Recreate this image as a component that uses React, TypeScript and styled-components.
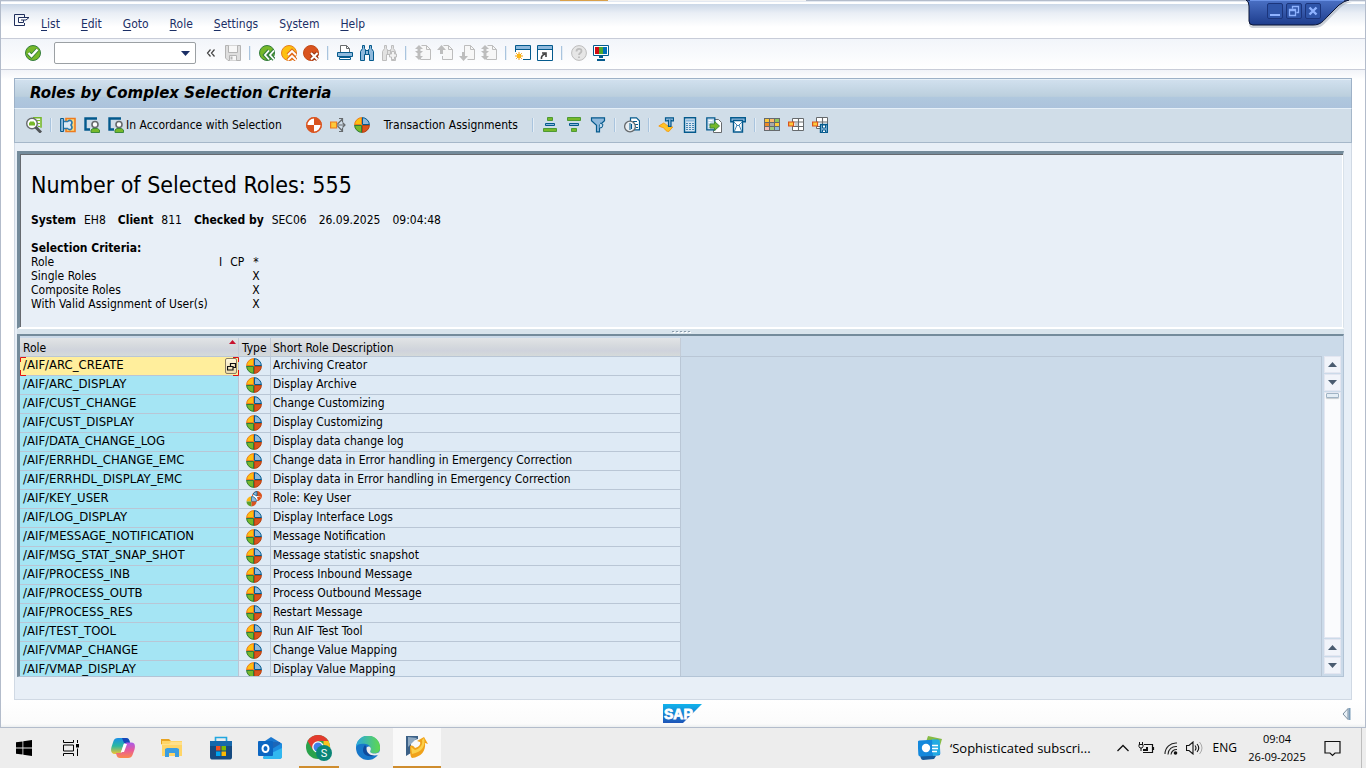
import React from 'react';
import styled, { createGlobalStyle, css } from 'styled-components';

const UI_FONT = '"DejaVu Sans Condensed", "DejaVu Sans", sans-serif';
const OS_FONT = '"Open Sans", "Noto Sans", sans-serif';

const GlobalStyle = createGlobalStyle`
  *, *::before, *::after { box-sizing: border-box; }
  body { margin: 0; background: #ededed; }
  button { font: inherit; color: inherit; background: none; border: 0; padding: 0; cursor: pointer; }
`;

/* ---------- shell ---------- */

const Screen = styled.div`
  height: 100vh;
  min-height: 480px;
  display: flex;
  flex-direction: column;
  font-family: ${UI_FONT};
  font-size: 12px;
  line-height: 14px;
  color: #000;
`;

const SapWindow = styled.main`
  position: relative;
  flex: 1;
  min-height: 0;
  display: flex;
  flex-direction: column;
  background: #fff;
  border: 1px solid #b3bccb;
`;

/* sliver of the remote session bar that peeks over the window's top edge */
const SessionEdge = styled.div`
  position: absolute;
  top: -1px;
  left: 41%;
  width: 18%;
  height: 1px;
  background: linear-gradient(90deg, #d9a04a 48px, #f3f3f3 48px);
`;

const MenuBar = styled.nav`
  flex: none;
  height: 38px;
  display: flex;
  align-items: center;
  gap: 21px;
  padding: 8px 12px 0 13px;
  border-bottom: 1px solid #c8ccd8;
  background: linear-gradient(#e3e9f2 0 1px, #fff 1px 3px, #cbd7e7 3px, #e9eef5 12px, #fff 26px);
`;

const MenuItem = styled.button`
  color: #1b2f66;
  line-height: 16px;
  & > u { text-underline-offset: 2px; }
`;

const MenuGlyph = styled.button`
  display: flex;
  margin: -4px -10px 0 0;
`;

const WindowTab = styled.div`
  position: absolute;
  top: -1px;
  right: 13px;
  width: 106px;
  height: 30px;
  & > svg { position: absolute; inset: 0; }
`;

const WindowButtons = styled.div`
  position: relative;
  display: flex;
  gap: 3px;
  padding: 3px 0 0 21px;
`;

const WindowButton = styled.button`
  width: 16px;
  height: 16px;
  display: flex;
  border: 1px solid #1b357c;
  border-radius: 2px;
  background: #2f55a9;
`;

const Toolbar = styled.div`
  flex: none;
  height: 31px;
  display: flex;
  align-items: center;
  gap: 6px;
  padding: 0 24px 2px;
  border-bottom: 1px solid #c8ccd8;
  background: linear-gradient(#f2f5fa, #fff);
`;

const IconButton = styled.button`
  flex: none;
  display: flex;
  align-items: center;
  justify-content: center;
  width: 16px;
  height: 16px;
`;

const Separator = styled.span<{ $space?: number }>`
  flex: none;
  width: 2px;
  height: 14px;
  margin: 0 ${p => p.$space ?? 0}px;
  background: #a9c4de;
  border-right: 1px solid #e4edf5;
`;

const CommandBox = styled.div`
  flex: none;
  display: flex;
  width: 142px;
  height: 22px;
  margin: 0 4px 0 7px;
  background: #fff;
  border: 1px solid #9ba0a4;
  border-radius: 2px;
`;

const CommandInput = styled.input`
  flex: 1;
  min-width: 0;
  border: 0;
  outline: 0;
  padding: 0 4px;
  background: transparent;
  font: inherit;
`;

const ComboArrow = styled.button`
  width: 20px;
  display: flex;
  align-items: center;
  justify-content: center;
`;

const Collapse = styled.button`
  width: 10px;
  height: 16px;
  display: flex;
  margin-right: 3px;
`;

const Work = styled.section`
  flex: 1;
  min-height: 0;
  display: flex;
  flex-direction: column;
  padding: 8px 13px 0;
  background: linear-gradient(#f1f3f8, #fff 10px);
`;

const Panel = styled.div`
  flex: 1;
  min-height: 0;
  display: flex;
  flex-direction: column;
  border: 1px solid #d0d9e4;
  background: #e8eff7;
`;

const Title = styled.h1`
  flex: none;
  margin: -1px -1px 0;
  height: 31px;
  padding: 0 15px;
  font-family: "DejaVu Sans", sans-serif;
  font-size: 15px;
  font-weight: bold;
  font-style: italic;
  line-height: 28px;
  border: 1px solid #9db1c7;
  border-bottom: 1px solid #e6f0f8;
  box-shadow: inset 0 1px 0 #e6f0f8;
  background: linear-gradient(#d2e1ef, #bbcfdd 60%, #b0c8de 62%, #acc3dc);
`;

const AppToolbar = styled.div`
  flex: none;
  height: 34px;
  margin: 0 -1px;
  display: flex;
  align-items: center;
  gap: 8px;
  padding: 0 11px 2px;
  border: 1px solid #a5b7c9;
  border-top: 0;
  background: #d0dde8;
`;

const TextButton = styled.button<{ $left?: number; $right?: number }>`
  display: flex;
  align-items: center;
  gap: 2px;
  height: 18px;
  white-space: nowrap;
  margin: 0 ${p => p.$right ?? 0}px 0 ${p => p.$left ?? 0}px;
`;

const Summary = styled.section`
  flex: none;
  height: 178px;
  margin: 8px 7px 0 2px;
  padding: 17px 11px;
  border-style: solid;
  border-width: 3px 1px 2px 3px;
  border-color: #748b9b #d9e2ea #fff #748b9b;
  box-shadow: inset 1px 1px 0 #666a70, inset -1px 0 0 #fff;
`;

const Count = styled.h2`
  margin: 0;
  font-size: 23px;
  font-weight: normal;
  line-height: 28px;
`;

const Facts = styled.dl`
  display: flex;
  gap: 8px;
  margin: 14px 0;
  & > dt { font-weight: bold; }
  & > dd { margin: 0 4px 0 0; }
`;

const Criteria = styled.table`
  border-collapse: collapse;
  & caption { text-align: left; font-weight: bold; }
  & th { font-weight: normal; text-align: left; padding: 0; width: 188px; }
  & td { padding: 0 8px 0 0; }
  & td:last-child { padding: 0; text-align: center; }
`;

const Splitter = styled.div`
  flex: none;
  height: 5px;
  margin: 0 7px 0 2px;
  display: flex;
  align-items: center;
  justify-content: center;
  gap: 2px;
  background: #d9e4ec;
  & > i { width: 2px; height: 1px; background: #8b9cab; box-shadow: 1px 1px 0 #fff; }
`;

const Grid = styled.section`
  flex: 1;
  min-height: 0;
  margin: 0 7px 22px 2px;
  display: flex;
  overflow: hidden;
  background: #cbdae9;
  border-style: solid;
  border-width: 2px 1px 1px 3px;
  border-color: #748b9b #b3c4d6 #b3c4d6 #748b9b;
`;

const GridBody = styled.div`
  flex: 1;
  min-width: 0;
  overflow: hidden;
  padding-top: 2px;
  background:
    linear-gradient(#b9c6d5, #b9c6d5) 0 20px / 100% 1px no-repeat,
    linear-gradient(#b9c6d5, #b9c6d5) 100% 20px / 1px 100% no-repeat;
`;

const RoleTable = styled.table`
  width: 661px;
  table-layout: fixed;
  border-collapse: separate;
  border-spacing: 0;
`;

const HeadCell = styled.th<{ $width: number }>`
  position: relative;
  width: ${p => p.$width}px;
  height: 19px;
  padding: 2px 0 0 3px;
  text-align: left;
  font-weight: normal;
  white-space: nowrap;
  border-right: 1px solid #c3cbd6;
  border-bottom: 1px solid #b9c6d5;
  background: linear-gradient(#e2e4e6, #d6dade 40%, #cfd3dc 70%, #d5dada);
  & > svg { position: absolute; top: 2px; right: 2px; }
  &:last-child { padding-left: 2px; }
`;

const cell = css`
  height: 19px;
  padding: 0 0 2px 3px;
  white-space: nowrap;
  border-right: 1px solid #b9c6d5;
  border-bottom: 1px solid #b9c6d5;
`;

const RoleCell = styled.td<{ $selected?: boolean }>`
  ${cell}
  position: relative;
  font-size: 13px;
  background: ${p => (p.$selected ? '#ffee9c' : '#a5e5f4')};
`;

const TypeCell = styled.td`
  ${cell}
  padding: 0 0 0 7px;
  background: #deeaf5;
  & > svg { display: block; }
`;

const TextCell = styled.td`
  ${cell}
  padding-left: 2px;
  background: #deeaf5;
`;

const SelectionFrame = styled.svg`
  position: absolute;
  top: 0;
  left: 0;
  width: calc(100% + 1px);
  height: calc(100% + 1px);
`;

const PickButton = styled.button`
  position: absolute;
  top: 1px;
  right: 1px;
  width: 12px;
  height: 16px;
  display: flex;
  align-items: center;
  justify-content: center;
  border: 1px solid #8a7d62;
  border-radius: 2px;
  background: linear-gradient(#fff8dc, #ecdcae);
`;

const ScrollBar = styled.div`
  flex: none;
  width: 21px;
  display: flex;
  flex-direction: column;
  gap: 1px;
  padding: 20px 2px 2px;
`;

const ScrollButton = styled.button`
  flex: none;
  height: 17px;
  display: flex;
  align-items: center;
  justify-content: center;
  background: #f1f4fa;
  border: 1px solid #e3e6f1;
`;

const ScrollTrack = styled.div`
  flex: 1;
  background: #fafbfd;
  border: 1px solid #e3e6f1;
`;

const ScrollThumb = styled.div`
  height: 5px;
  margin: 0 1px;
  border: 1px solid #a0b3c4;
  border-radius: 1px;
  background: #e4edf5;
  box-shadow: 0 1px 1px #c4c9ce;
`;

const StatusBar = styled.footer`
  flex: none;
  height: 27px;
  display: grid;
  grid-template-columns: 1fr auto 1fr;
  align-items: center;
  padding: 0 14px 0 12px;
  background: linear-gradient(#fff, #fbfbfb 24px, #eceff0);
  & > :last-child { justify-self: end; }
`;

/* ---------- task bar ---------- */

const TaskBar = styled.footer`
  flex: none;
  height: 40px;
  display: flex;
  align-items: stretch;
  background: #ededed;
  font-family: ${OS_FONT};
`;

const Shell = styled.div`
  display: flex;
  & > button { width: 47px; }
`;

const Apps = styled.div`
  display: flex;
  gap: 1px;
  margin-left: 5px;
`;

const AppButton = styled.button<{ $running?: boolean; $active?: boolean }>`
  width: 48px;
  display: flex;
  align-items: center;
  justify-content: center;
  background: ${p => (p.$active ? '#f9f9f9' : 'none')};
  ${p => p.$running && css`
    background-image: linear-gradient(#cf8d2e, #cf8d2e);
    background-size: ${p.$active ? '100%' : '40px'} 2px;
    background-position: bottom center;
    background-repeat: no-repeat;
  `}
`;

const Tray = styled.div`
  margin-left: auto;
  display: flex;
  align-items: center;
  padding-right: 4px;
`;

const News = styled.button`
  display: flex;
  align-items: center;
  gap: 8px;
  margin-right: 24px;
  font-size: 13px;
  line-height: 20px;
  white-space: nowrap;
`;

const TrayIcons = styled.div`
  display: flex;
  align-items: center;
  gap: 8px;
`;

const Language = styled.button`
  margin-left: 2px;
`;

const Clock = styled.time`
  width: 60px;
  margin: 0 17px 0 10px;
  text-align: center;
  font-size: 11px;
  line-height: 18px;
  white-space: nowrap;
`;

const Notify = styled.button`
  display: flex;
  padding-right: 20px;
  height: 40px;
  align-items: center;
  border-right: 1px solid #bdbdbd;
`;

/* ---------- icons ---------- */

const BLUE = '#045a8d';
const SKY = '#8fb9dc';
const GREEN = '#76b82a';
const AMBER = '#fcb514';
const RUST = '#d9531e';
const GREY = '#666a6d';
const MUTED = '#bdbdbd';

type P = { children: React.ReactNode; w?: number; h?: number; vb?: string };
const Svg = ({ children, w = 16, h = 16, vb }: P) => (
  <svg width={w} height={h} viewBox={vb ?? `0 0 ${w} ${h}`} fill="none" aria-hidden="true" style={{ flex: 'none' }}>{children}</svg>
);

const Check = () => <Svg><circle cx="8" cy="8" r="7.5" fill={GREEN} stroke="#347d3d" /><path d="M3.5 8l3 3 6-6.5" stroke="#347d3d" strokeWidth="4" /><path d="M3.5 8l3 3 6-6.5" stroke="#fff" strokeWidth="2.4" /></Svg>;
const Chevrons = () => <Svg w={10}><path d="M4.5 4.5L1.5 8l3 3.5M8.5 4.5L5.5 8l3 3.5" stroke="#444" strokeWidth="1.2" /></Svg>;
const Save = () => <Svg><path d="M.5.5h15v15H3L.5 13z" fill="#dedede" stroke="#b4b4b4" /><path d="M3.5.5v7h9v-7M4.5 15.500v-5h7v5" fill="#f7f7f7" stroke="#b4b4b4" /><path d="M6.500 11.500v3" stroke="#b4b4b4" strokeWidth="2" /></Svg>;
const Back = () => <Svg><circle cx="8" cy="8" r="7.5" fill={GREEN} stroke="#347d3d" /><path d="M10 5.5L6 10l4 4.5M15 5.5L11 10l4 4.5" stroke="#347d3d" strokeWidth="4" /><path d="M10 5.5L6 10l4 4.5M15 5.5L11 10l4 4.5" stroke="#fff" strokeWidth="1.8" /></Svg>;
const Exit = () => <Svg><circle cx="8" cy="8" r="7.5" fill="#fdc010" stroke="#e67e22" /><path d="M7 10l4-4 4 4M7 15l4-4 4 4" stroke="#e06a1c" strokeWidth="4" /><path d="M7 10l4-4 4 4M7 15l4-4 4 4" stroke="#fff" strokeWidth="1.8" /></Svg>;
const Cancel = () => <Svg><circle cx="8" cy="8" r="7.5" fill={RUST} stroke="#c24a17" /><path d="M8 8l6.5 6.5M14.5 8L8 14.5" stroke="#9c3513" strokeWidth="4" /><path d="M8 8l6.5 6.5M14.5 8L8 14.5" stroke="#fff" strokeWidth="2" /></Svg>;
const Printer = () => <Svg><path d="M3.5 7V.5h6l3 3V7" fill="#fff" stroke={GREY} /><path d="M9.5.5v3h3" stroke={GREY} /><path d="M.5 7.500h15v4H.5z" fill={SKY} stroke={BLUE} /><path d="M2.500 12.500h11v2h-11z" fill="#fff" stroke={BLUE} /></Svg>;
const Binoculars = ({ plus }: { plus?: boolean }) => {
  const s = plus ? MUTED : BLUE;
  return (
    <Svg>
      <path d="M3.5.5h2v3l1.500 2h2l1.500-2v-3h2v3l2 3v9h-4v-6h-5v6h-4v-9l2-3z" fill={plus ? '#e2e2e2' : SKY} stroke={s} />
      <path d="M6.500 5v4M9.500 5v4" stroke={s} />
      {plus && <path d="M10.500 6.500h3V9h2v3h-2v2.500h-3V12h-2V9h2z" fill="#f2f2f2" stroke={MUTED} />}
    </Svg>
  );
};
const PageIcon = ({ up, down, both }: { up?: boolean; down?: boolean; both?: boolean }) => (
  <Svg>
    <path d={down ? 'M5.5 8V.5h6l4 4v10h-7' : 'M6.5.5h5l4 4v10h-10V11'} fill="#f7f7f7" stroke={MUTED} /><path d="M11.5.5v4h4" stroke={MUTED} />
    {up && <path d="M4.500 0L9 5H6v4H3V5H0z" fill={MUTED} />}
    {down && <path d="M4.500 16L9 11H6V7H3v4H0z" fill={MUTED} />}
    {both && <path d="M4 0l4 4H5.500v2H8l-4 4-4-4h2.500V4H0zM2.500 9h3v2H8l-4 4-4-4h2.500z" fill={MUTED} />}
  </Svg>
);
const NewSession = () => <Svg><path d="M.5 7V.5h15v14H8" fill="#fff" stroke={BLUE} /><path d="M1 1h14v3H1z" fill={SKY} /><path d="M0 4.500h16" stroke={BLUE} /><path d="M4 7v8M0 11h8M1.200 8.200l5.600 5.600M6.800 8.200l-5.600 5.600" stroke="#f39c12" /><circle cx="4" cy="11" r="2.200" fill="#fdb813" /></Svg>;
const Shortcut = () => <Svg><path d="M.5.5h15v15H.5z" fill="#fff" stroke={BLUE} /><path d="M1 1h14v3H1z" fill={SKY} /><path d="M0 4.500h16" stroke={BLUE} /><path d="M4.500 14c-.5-2.500 1-4 3.500-5M5 8h4v4" stroke="#444" strokeWidth="1.600" /></Svg>;
const HelpIcon = () => <Svg><circle cx="8" cy="8" r="7.400" fill="#e6e6e6" stroke={MUTED} /><path d="M5.500 6.500c0-3.500 5-3.500 5-.5 0 2-2.500 2-2.500 4M8 11.500v1.500" stroke={MUTED} strokeWidth="1.800" /></Svg>;
const MonitorIcon = () => <Svg><path d="M.5.5h15v10H.5z" fill="#fff" stroke={BLUE} /><path d="M2 2h4v7H2z" fill="#d20a11" /><path d="M6 2h4v7H6z" fill="#4fa82e" /><path d="M10 2h4v7h-4z" fill="#0070b8" /><path d="M6 11h4v2H6zM4 14h8v2H4z" fill={BLUE} /></Svg>;

const DetailIcon = () => <Svg><path d="M7 .8h8v10" stroke={GREEN} strokeWidth="1.600" fill="#f1f7ea" /><path d="M11 3.500h3M12 6.500h2M12 9.500h2" stroke={GREEN} /><circle cx="6" cy="6.500" r="5.300" fill="#fff" stroke={GREY} strokeWidth="1.400" /><path d="M3 5.500h6v3H3zM4 4.500h4v1H4z" fill={GREEN} /><path d="M9.500 10l5.500 5.500" stroke="#505457" strokeWidth="3" /></Svg>;
const AssignIcon = () => <Svg><path d="M6 1.500h9v13H6z" fill="#fcd77a" stroke="#ee7b1d" strokeWidth="1.600" /><path d="M.6 1.500h3v13h-3z" fill={SKY} stroke={BLUE} /><path d="M4 4.500h3.500c3-2.500 6 0 3.500 3.500 2.500 3.500-.5 6-3.500 3.500H4" fill="#dce9f4" stroke="#2a78ac" strokeWidth="1.600" /></Svg>;
const UserFrame = () => <Svg><path d="M6 12.500H1.500v-11H13" stroke={BLUE} strokeWidth="2.400" /><circle cx="11" cy="7.500" r="3" fill="#fff" stroke={GREY} strokeWidth="1.600" /><path d="M7 15.500V13l2-1.500h4.500l2 1.500v2.500z" fill={GREEN} stroke="#3c8a3c" /></Svg>;
const CompositeIcon = () => <Svg><circle cx="8" cy="8" r="7.400" fill="#fff" stroke={RUST} /><path d="M8 8V.6A7.400 7.400 0 0 0 .6 8zM8 8v7.400A7.400 7.400 0 0 0 15.400 8z" fill="#fff" /><path d="M8 8V1a7 7 0 0 1 7 7zM8 8v7a7 7 0 0 1-7-7z" fill={RUST} /><circle cx="8" cy="8" r="7.200" stroke={RUST} strokeWidth="1.400" /></Svg>;
const SpreadIcon = () => <Svg><path d="M.6 5h6v6h-6z" fill="#fdc93a" stroke="#ee7b1d" strokeWidth="1.200" /><path d="M7 8h8M12.500 5.500L15 8l-2.500 2.500M7.500 7l5-5M9 1.500h3.500V5M7.500 9l5 5M9 14.500h3.500V11" stroke={GREY} strokeWidth="1.200" /></Svg>;
const Pie = () => (
  <Svg>
    <path d="M8 8V.5A7.5 7.5 0 0 0 .5 8z" fill="#fdc010" /><path d="M8 8V.5A7.5 7.5 0 0 1 15.500 8z" fill={SKY} />
    <path d="M8 8v7.500A7.500 7.500 0 0 1 .5 8z" fill={GREEN} /><path d="M8 8v7.500A7.500 7.500 0 0 0 15.500 8z" fill={RUST} />
    <path d="M.6 8A7.400 7.400 0 0 1 8 .6" stroke="#ee7b1d" /><path d="M8 .6A7.400 7.400 0 0 1 15.400 8" stroke={BLUE} />
    <path d="M.6 8A7.400 7.400 0 0 0 8 15.400" stroke="#2f7d3a" /><path d="M8 15.400A7.400 7.400 0 0 0 15.400 8" stroke="#b8430f" />
    <path d="M7.500 1v6.500H1" stroke="#ee7b1d" /><path d="M8.500 1v6.500H15" stroke={BLUE} />
    <path d="M7.500 15V8.500H1" stroke="#2f7d3a" /><path d="M8.500 15V8.500H15" stroke="#b8430f" />
  </Svg>
);
const DoublePie = () => (
  <Svg>
    <circle cx="11" cy="5" r="4.500" fill="#fff" stroke={RUST} /><path d="M11 5V.5A4.500 4.500 0 0 1 15.500 5z" fill={RUST} /><path d="M7 3a5 5 0 0 1 4-2.500V5z" fill={SKY} stroke={BLUE} strokeWidth=".8" /><path d="M11 6l4-1c0 2-1 4-3 5z" fill={RUST} />
    <circle cx="5.500" cy="10.500" r="5.500" fill="#deeaf5" /><path d="M5.500 10.500v-5a5 5 0 0 0-5 5z" fill={AMBER} /><path d="M5.500 10.500v-5a5 5 0 0 1 5 5z" fill={SKY} stroke={BLUE} strokeWidth=".7" />
    <path d="M5.500 10.500v5a5 5 0 0 1-5-5z" fill="#58a02c" /><path d="M5.500 10.500v5a5 5 0 0 0 5-5z" fill={RUST} />
  </Svg>
);
const SortAsc = () => <Svg><path d="M5.500.5h5v3h-5z" fill={GREEN} stroke="#4d9a35" /><path d="M3.500 6.500h9v2h-9z" fill={SKY} stroke={BLUE} /><path d="M1.500 11.500h13v3h-13z" fill={GREEN} stroke="#4d9a35" /></Svg>;
const SortDesc = () => <Svg><path d="M1.500.5h13v3h-13z" fill={GREEN} stroke="#4d9a35" /><path d="M3.500 6.500h9v2h-9z" fill={SKY} stroke={BLUE} /><path d="M5.500 11.500h5v3h-5z" fill={GREEN} stroke="#4d9a35" /></Svg>;
const Filter = () => <Svg><path d="M1.500.8h13v3l-5 4.500v6.500h-3V8.300l-5-4.500z" fill={SKY} stroke={BLUE} strokeWidth="1.200" /><path d="M10 6l3 1.500-1 3-2.500.5" fill="#c7dcee" stroke={BLUE} /></Svg>;
const PreviewIcon = () => <Svg><path d="M6.500.8h6l3 3v9h-9z" fill="#fff" stroke={BLUE} strokeWidth="1.200" /><path d="M9 4.500h4M11 7.500h3M12 10.500h2" stroke={BLUE} /><circle cx="6" cy="9.500" r="5.400" fill="#e9eef2" stroke={GREY} strokeWidth="1.300" /><path d="M6 6v7M7.500 7v5" stroke={BLUE} /></Svg>;
const TextIcon = () => <Svg><path d="M.8 9l5-3c2 1 4 4 9 4l-4 4.500c-4 0-4-4-6-4z" fill="#ffc425" stroke="#f59c13" /><path d="M7.500.8h8v3H14l-1-.5v6h-2.500v-6l-1.500.5H7.500z" fill={SKY} stroke={BLUE} strokeWidth="1.200" /></Svg>;
const Calculator = () => <Svg><path d="M2.500.8h11v14.500h-11z" fill="#d6e5f2" stroke={BLUE} strokeWidth="1.400" /><path d="M4 2.500h8v2H4z" fill={SKY} /><path d="M4 6.500h8M4 8.500h8M4 10.500h8M4 12.500h8" stroke="#4687b5" strokeDasharray="2 1" /></Svg>;
const ExportIcon = () => <Svg><path d="M7.500 2.500h5l3 3v10h-8z" fill="#fff" stroke={GREY} /><path d="M.8.8h8v12h-8z" fill="#c3d9ec" stroke={BLUE} strokeWidth="1.300" /><path d="M2.500 3.500h4M2.500 5.500h2M2.500 9.500h2" stroke="#fff" /><path d="M4 7h4.500V4.500l5 4.500-5 4.500V11H4z" fill={GREEN} stroke="#3c8a3c" /></Svg>;
const MailIcon = () => <Svg><path d="M.8.8h14.500v4H.8z" fill={SKY} stroke={BLUE} strokeWidth="1.400" /><path d="M3.500 3.500h9v11.500h-9z" fill="#fff" stroke={BLUE} strokeWidth="1.400" /><path d="M4 5l4 4 4-4M4.500 14L7 8M11.500 14L9 8" stroke="#3d83b4" /></Svg>;
const LAYOUT_COLOURS = ['#fdc93a', '#fcb96a', '#8fc45a', '#ee8a28', '#a9a9a9', '#fdc93a', '#f4bcbc', '#9fcc7c', '#8fb9dc'];
const LayoutGrid = () => <Svg><path d="M0 1h16v13H0z" fill={GREY} />{LAYOUT_COLOURS.map((c, i) => <path key={i} d={`M${1 + (i % 3) * 5} ${2 + Math.floor(i / 3) * 4}h4v3h-4z`} fill={c} />)}</Svg>;
const LayoutPick = ({ save }: { save?: boolean }) => (
  <Svg>
    <path d={save ? 'M4.500.5h11v11h-11z' : 'M4.500 1.500h11v12h-11z'} fill="#fff" stroke={GREY} /><path d="M5 5h11M5 9.500h11M10.500 1v12" stroke={GREY} strokeWidth="1.100" />
    {!save && <path d="M7 6h3v3H7z" fill="#c3ccd4" />}
    <path d="M.6 5h5v4h-5z" fill="#fdc93a" stroke={RUST} strokeWidth="1.200" />
    {save && <><path d="M8.500 7.500h7v8h-7z" fill={SKY} stroke={BLUE} strokeWidth="1.400" /><path d="M10.500 8h3v3h-3zM10.500 13h3v2.500h-3z" fill="#fff" stroke={BLUE} /></>}
  </Svg>
);
const MenuIcon = () => <Svg><path d="M10.500 3V.5H.5v11h10V9" stroke="#1f2e5c" /><path d="M4.500 3.500h10.500L12 6H9.500v2.500h-5z" fill="#fff" stroke="#1f2e5c" /><path d="M7 6h2.500" stroke="#1f2e5c" /></Svg>;

const Triangle = ({ down }: { down?: boolean }) => <Svg w={9} h={5}><path d={down ? 'M0 0h9L4.500 5z' : 'M0 5h9L4.500 0z'} fill="#4a5c70" /></Svg>;

const SapLogo = () => (
  <svg width="39" height="19" viewBox="0 0 39 19" role="img" aria-label="SAP">
    <defs><linearGradient id="sap" x2="0" y2="1"><stop stopColor="#10b4ec" /><stop offset="1" stopColor="#1f55b8" /></linearGradient></defs>
    <path d="M0 0h39L20 19H0z" fill="url(#sap)" />
    <text x="1" y="15" fontFamily="Liberation Sans, sans-serif" fontWeight="bold" fontSize="14" fill="#fff" stroke="#fff" strokeWidth="0.8">SAP</text>
  </svg>
);

const WindowsIcon = () => <Svg><path d="M0 2.300L6.500 1.400v6.200H0zM7.300 1.300L16 0v7.600H7.300zM0 8.400h6.500v6.200L0 13.700zM7.300 8.400H16V16l-8.700-1.300z" fill="#000" /></Svg>;
const TaskView = () => <Svg><path d="M.5 0v2.500h10V0M.5 16v-2.500h10V16M.5 5h10v6H.5zM14.500 0v3M14.500 8.500V16" stroke="#000" /><path d="M13 4h3v3.500h-3z" fill="#000" /></Svg>;
const Copilot = () => (
  <Svg w={24} h={22}>
    <defs>
      <linearGradient id="cp1" x2="0" y2="1"><stop stopColor="#1b8fe8" /><stop offset=".5" stopColor="#2bb8a0" /><stop offset="1" stopColor="#f4c430" /></linearGradient>
      <linearGradient id="cp2" x2="0" y2="1"><stop stopColor="#a85bea" /><stop offset=".5" stopColor="#e85a9a" /><stop offset="1" stopColor="#fb8a4a" /></linearGradient>
    </defs>
    <path d="M7 1h8c2 0 3 1 3.500 3l.5 2h-4c-2 0-2.500 1-3 3l-1.500 5c-.5 2-1.500 3-3.500 3H4c-4 0-4.500-3-3.500-7L2.500 4C3.200 2 4.500 1 7 1z" fill="url(#cp1)" />
    <path d="M11 1h4c2 0 3 1 3.500 3l.5 2h-6z" fill="#1746b8" />
    <path d="M17 21H9c-2 0-3-1-3.500-3L5 16h4c2 0 2.500-1 3-3L13.500 8c.5-2 1.500-2.500 3.500-2.500h3c4 0 4.500 3 3.500 7L21.500 18c-.7 2-2 3-4.500 3z" fill="url(#cp2)" />
    <path d="M13 7h3l-3 8h-3z" fill="#fff" />
  </Svg>
);
const Explorer = () => <Svg w={22} h={20}><path d="M0 1h8l2 2h-2v4H0z" fill="#e8a321" /><path d="M1 3h20v15H1z" fill="#ffd567" /><path d="M0 6h8l2-2h11v3H0z" fill="#ffe08a" /><path d="M4 19v-8l2-1h10l2 1v8h-4v-4H8v4z" fill="#3b9de0" /></Svg>;
const Store = () => <Svg w={24} h={24}><path d="M6.500 6V1.500h11V6" stroke="#22a7e0" strokeWidth="1.600" /><path d="M1 5h22v16c0 2-1 2.500-2.500 2.500h-17C2 23.500 1 23 1 21z" fill="#164a80" /><path d="M1 5h22v5H1z" fill="#1668ac" /><path d="M7 10h4.500v4.500H7z" fill="#f25022" /><path d="M12.500 10H17v4.500h-4.500z" fill="#7fba00" /><path d="M7 15.500h4.500V20H7z" fill="#00a4ef" /><path d="M12.500 15.500H17V20h-4.500z" fill="#ffb900" /></Svg>;
const Outlook = () => <Svg w={24} h={22}><path d="M4 6l9-6 10 6v8H4z" fill="#1a78d0" /><path d="M7 5h15v9H7z" fill="#1c66b8" /><path d="M14 12l10-6v13c0 2-1 3-3 3H7c-1.500 0-2-1-2-2z" fill="#1c8ce0" /><path d="M5 20l19-9v8c0 2-1 3-3 3H7c-1.500 0-2-1-2-2z" fill="#31b8f0" /><rect y="4" width="15" height="15" rx="1" fill="#0c66c2" /><ellipse cx="7.500" cy="11.500" rx="3" ry="3.500" stroke="#fff" strokeWidth="2" /></Svg>;
const Chrome = () => (
  <Svg w={26} h={26}>
    <circle cx="12" cy="12" r="12" fill="#2ba24c" />
    <path d="M22.400 6A12 12 0 0 1 12 24l5.500-9V6z" fill="#fcc31e" />
    <path d="M1.600 6A12 12 0 0 1 22.400 6H12l-5 9z" fill="#e33b2e" />
    <circle cx="12" cy="12" r="5.800" fill="#fff" /><circle cx="12" cy="12" r="4.500" fill="#3f7fe8" /><circle cx="18" cy="18" r="8" fill="#0b8577" />
    <text x="18" y="22" fontSize="11" textAnchor="middle" fontFamily="Roboto, sans-serif" fill="#fff">S</text>
  </Svg>
);
const Edge = () => (
  <Svg w={24} h={24}>
    <defs><linearGradient id="eg" x2="1"><stop stopColor="#2aa7e0" /><stop offset="1" stopColor="#5fd84e" /></linearGradient></defs>
    <circle cx="12" cy="12" r="12" fill="#1777c9" />
    <path d="M0 11A12 12 0 0 1 24 12c0 4-3 5.500-6 5.500s-4.500-1-3.500-3c1-2 0-5.500-4.500-6.500S1 8 0 11z" fill="url(#eg)" />
    <path d="M9 9c-5 6 0 13 8 11 2-.5 3.500-1.500 5-3-3 1.500-11 2-10.500-4.500z" fill="#0f4b9c" />
    <path d="M10.500 11.500c2.500-2.500 5.500 0 4 3-1 2 1 3 3.500 3 2.500 0 4-.5 6-2l-1 3c-5 2-13 1-12.500-7z" fill="#ededed" />
  </Svg>
);
const SapGui = () => <Svg w={24} h={24}><path d="M1 0h12v3L6 5v12l-5 3z" fill="#3c6187" /><path d="M3 1l9 1-9 9z" fill="#8fa9c2" /><path d="M5 10c2-1 4 0 5 2 4-1 6-4 5-6l-3-1 7-4 4 7-3-1c1 8-4 14-13 15-2-1-2-8-2-12z" fill="#f0a21a" /><path d="M6 11l4 3c6-2 8-6 7-10l2-2c2 8-2 14-12 16z" fill="#fbd04a" /></Svg>;
const NewsIcon = () => <Svg w={24} h={24}><path d="M10 0l14 3-3 10-13-7z" fill="#86bb45" /><path d="M2 16l16 4-2 3-11 1c-2 0-3-3-3-8z" fill="#155a9c" /><rect y="4" width="22" height="16" rx="2" fill="#1488dc" transform="rotate(-3 11 12)" /><path d="M14 3l8 1v14l-7 2z" fill="#2cc3e8" opacity=".6" /><circle cx="8" cy="12" r="4.200" fill="#fff" /><path d="M14 9.500h6M14 12.500h6M14 15.500h5" stroke="#fff" strokeWidth="1.300" /></Svg>;
const Caret = () => <Svg w={12} h={8}><path d="M.5 7L6 1.500 11.500 7" stroke="#111" strokeWidth="1.300" /></Svg>;
const Battery = () => <Svg w={17} h={12}><path d="M6 2.500h8.500v8H5M15.500 5v3" stroke="#111" strokeWidth="1.200" /><path d="M1.500 0v2M4.500 0v2M1 2.500h4v2L4 6H2L1 4.500zM3 6v3" stroke="#111" /><path d="M5 7h3V5h2v4H5z" fill="#111" /></Svg>;
const Wifi = () => <Svg w={14} h={14}><path d="M1 13A11 11 0 0 1 13 2M4 13.500a8 8 0 0 1 9-8M7 13.500a5.500 5.500 0 0 1 6-5" stroke="#222" strokeWidth="1.100" /><circle cx="11.500" cy="12" r="1.800" fill="#111" /></Svg>;
const Speaker = () => <Svg w={18} h={14}><path d="M.5 4.500H3L7 1v12L3 9.500H.5zM9 4.500q2 2.500 0 5M11 3q3.500 4 0 8" stroke="#111" strokeWidth="1.100" /><path d="M13.500 1q5 6 0 12" stroke="#aaa" /></Svg>;
const Bubble = () => <Svg w={17} h={17}><path d="M1 1.500h15V13h-5l-2.500 2.500L6 13H1z" stroke="#111" strokeWidth="1.200" /></Svg>;

/* ---------- data ---------- */

const menus: [string, string, string][] = [
  ['', 'L', 'ist'], ['', 'E', 'dit'], ['', 'G', 'oto'], ['', 'R', 'ole'], ['', 'S', 'ettings'], ['S', 'y', 'stem'], ['', 'H', 'elp'],
];

type Tool = [string, React.ReactNode] | null;
const systemTools: Tool[] = [
  ['Save', <Save />], null,
  ['Back', <Back />], ['Exit', <Exit />], ['Cancel', <Cancel />], null,
  ['Print', <Printer />], ['Find', <Binoculars />], ['Find next', <Binoculars plus />], null,
  ['First page', <PageIcon both />], ['Previous page', <PageIcon up />], ['Next page', <PageIcon down />], ['Last page', <PageIcon both />], null,
  ['Create session', <NewSession />], ['Create shortcut', <Shortcut />], null,
  ['Help', <HelpIcon />], ['Customize local layout', <MonitorIcon />],
];
const listTools: Tool[] = [
  null, ['Sort ascending', <SortAsc />], ['Sort descending', <SortDesc />], ['Set filter', <Filter />], null,
  ['Print preview', <PreviewIcon />], null,
  ['Word processing', <TextIcon />], ['Spreadsheet', <Calculator />], ['Local file', <ExportIcon />], ['Send', <MailIcon />], null,
  ['Change layout', <LayoutGrid />], ['Select layout', <LayoutPick />], ['Save layout', <LayoutPick save />],
];

const facts: [string, string[]][] = [
  ['System', ['EH8']], ['Client', ['811']], ['Checked by', ['SEC06', '26.09.2025', '09:04:48']],
];
const criteria = [
  ['Role', 'I', 'CP', '*'], ['Single Roles', '', '', 'X'], ['Composite Roles', '', '', 'X'],
  ['With Valid Assignment of User(s)', '', '', 'X'],
];

const roles: [string, string][] = [
  ['/AIF/ARC_CREATE', 'Archiving Creator'],
  ['/AIF/ARC_DISPLAY', 'Display Archive'],
  ['/AIF/CUST_CHANGE', 'Change Customizing'],
  ['/AIF/CUST_DISPLAY', 'Display Customizing'],
  ['/AIF/DATA_CHANGE_LOG', 'Display data change log'],
  ['/AIF/ERRHDL_CHANGE_EMC', 'Change data in Error handling in Emergency Correction'],
  ['/AIF/ERRHDL_DISPLAY_EMC', 'Display data in Error handling in Emergency Correction'],
  ['/AIF/KEY_USER', 'Role: Key User'],
  ['/AIF/LOG_DISPLAY', 'Display Interface Logs'],
  ['/AIF/MESSAGE_NOTIFICATION', 'Message Notification'],
  ['/AIF/MSG_STAT_SNAP_SHOT', 'Message statistic snapshot'],
  ['/AIF/PROCESS_INB', 'Process Inbound Message'],
  ['/AIF/PROCESS_OUTB', 'Process Outbound Message'],
  ['/AIF/PROCESS_RES', 'Restart Message'],
  ['/AIF/TEST_TOOL', 'Run AIF Test Tool'],
  ['/AIF/VMAP_CHANGE', 'Change Value Mapping'],
  ['/AIF/VMAP_DISPLAY', 'Display Value Mapping'],
];

const Tools = ({ items, space }: { items: Tool[]; space?: number }) => (
  <>{items.map((t, i) => (t ? <IconButton key={i} aria-label={t[0]}>{t[1]}</IconButton> : <Separator key={i} $space={space} />))}</>
);

const WindowControls = () => (
  <WindowTab>
    <svg width="106" height="30" viewBox="0 0 106 30" fill="none" aria-hidden="true">
      <defs><linearGradient id="tab" x2="0" y2="1"><stop stopColor="#4a70c4" /><stop offset="1" stopColor="#1d3c8c" /></linearGradient></defs>
      <path d="M0 0q3 1 3 6v16q0 4 4 4h61c8 0 10-4 16-10L94 6q5-5 12-6z" fill="#9aa3b2" opacity=".5" transform="translate(0 2)" />
      <path d="M0 0q3 1 3 6v15q0 4 4 4h60c8 0 10-4 16-10L93 5q5-4 10-5z" fill="url(#tab)" stroke="#0a1434" />
      <path d="M4 .5h94" stroke="#6c93e6" />
    </svg>
    <WindowButtons>
      <WindowButton aria-label="Minimize"><Svg w={14} h={14}><path d="M2 11h10" stroke="#8fb3ff" strokeWidth="2" /></Svg></WindowButton>
      <WindowButton aria-label="Restore"><Svg w={14} h={14}><path d="M5.500 4.500v-2h6v6h-2M2.500 5.500h6v6h-6zM2.500 6.500h6" stroke="#8fb3ff" strokeWidth="1.300" /></Svg></WindowButton>
      <WindowButton aria-label="Close"><Svg w={14} h={14}><path d="M3.500 3.500l7 7M10.500 3.500l-7 7" stroke="#8fb3ff" strokeWidth="2.400" /></Svg></WindowButton>
    </WindowButtons>
  </WindowTab>
);

export default function App() {
  return (
    <Screen>
      <GlobalStyle />
      <SapWindow>
        <SessionEdge />
        <MenuBar>
          <MenuGlyph aria-label="Window menu"><MenuIcon /></MenuGlyph>
          {menus.map(([a, b, c]) => <MenuItem key={a + b + c}>{a}<u>{b}</u>{c}</MenuItem>)}
        </MenuBar>
        <WindowControls />
        <Toolbar>
          <IconButton aria-label="Enter"><Check /></IconButton>
          <CommandBox>
            <CommandInput aria-label="Command field" />
            <ComboArrow aria-label="Command history"><Svg w={9} h={5}><path d="M0 0h9L4.500 5z" fill="#1b2f66" /></Svg></ComboArrow>
          </CommandBox>
          <Collapse aria-label="Hide command field"><Chevrons /></Collapse>
          <Tools items={systemTools} space={2} />
        </Toolbar>
        <Work>
          <Panel>
            <Title>Roles by Complex Selection Criteria</Title>
            <AppToolbar>
              <IconButton aria-label="Details"><DetailIcon /></IconButton>
              <Separator />
              <IconButton aria-label="Assignments"><AssignIcon /></IconButton>
              <IconButton aria-label="Users"><UserFrame /></IconButton>
              <TextButton $right={16}><UserFrame />In Accordance with Selection</TextButton>
              <IconButton aria-label="Composite roles"><CompositeIcon /></IconButton>
              <IconButton aria-label="Distribute"><SpreadIcon /></IconButton>
              <IconButton aria-label="Single roles"><Pie /></IconButton>
              <TextButton $left={6} $right={6}>Transaction Assignments</TextButton>
              <Tools items={listTools} />
            </AppToolbar>
            <Summary>
              <Count>Number of Selected Roles: 555</Count>
              <Facts>
                {facts.map(([k, vs]) => <React.Fragment key={k}><dt>{k}</dt>{vs.map(v => <dd key={v}>{v}</dd>)}</React.Fragment>)}
              </Facts>
              <Criteria>
                <caption>Selection Criteria:</caption>
                <tbody>
                  {criteria.map(([l, a, b, c]) => <tr key={l}><th scope="row">{l}</th><td>{a}</td><td>{b}</td><td>{c}</td></tr>)}
                </tbody>
              </Criteria>
            </Summary>
            <Splitter><i /><i /><i /><i /><i /></Splitter>
            <Grid>
              <GridBody>
                <RoleTable>
                  <thead>
                    <tr>
                      <HeadCell $width={219} scope="col">Role<Svg w={7} h={4}><path d="M3.500 0L7 4H0z" fill="#c8102e" /></Svg></HeadCell>
                      <HeadCell $width={32} scope="col">Type</HeadCell>
                      <HeadCell $width={410} scope="col">Short Role Description</HeadCell>
                    </tr>
                  </thead>
                  <tbody>
                    {roles.map(([name, text], i) => (
                      <tr key={name}>
                        <RoleCell $selected={i === 0}>
                          {name}
                          {i === 0 && (
                            <>
                              <SelectionFrame viewBox="0 0 219 19" preserveAspectRatio="none" fill="none">
                                <path d="M.5 5V.5H6M213 .5h5.500V5M.5 13v5.500H6M213 18.500h5.500V13" stroke="#e01010" />
                              </SelectionFrame>
                              <PickButton aria-label="Possible entries"><Svg w={9} h={9}><path d="M3.500 4V1.500h5v4H6M.5 4.500H6v3.500H.5zM3.500 1.500h5" stroke="#111" strokeWidth="1.200" /></Svg></PickButton>
                            </>
                          )}
                        </RoleCell>
                        <TypeCell>{name === '/AIF/KEY_USER' ? <DoublePie /> : <Pie />}</TypeCell>
                        <TextCell>{text}</TextCell>
                      </tr>
                    ))}
                  </tbody>
                </RoleTable>
              </GridBody>
              <ScrollBar>
                <ScrollButton aria-label="Scroll up"><Triangle /></ScrollButton>
                <ScrollButton aria-label="Line down"><Triangle down /></ScrollButton>
                <ScrollTrack><ScrollThumb /></ScrollTrack>
                <ScrollButton aria-label="Line up"><Triangle /></ScrollButton>
                <ScrollButton aria-label="Scroll down"><Triangle down /></ScrollButton>
              </ScrollBar>
            </Grid>
          </Panel>
        </Work>
        <StatusBar>
          <span />
          <SapLogo />
          <IconButton aria-label="Show status fields"><Svg><path d="M13 2.500v11L8 8z" fill="#e8eff5" stroke="#7b8fa0" /><path d="M14.500 2v12" stroke="#7b9cb8" strokeWidth="2" /></Svg></IconButton>
        </StatusBar>
      </SapWindow>
      <TaskBar>
        <Shell>
          <AppButton aria-label="Start"><WindowsIcon /></AppButton>
          <AppButton aria-label="Task view"><TaskView /></AppButton>
        </Shell>
        <Apps>
          <AppButton aria-label="Copilot"><Copilot /></AppButton>
          <AppButton aria-label="File Explorer"><Explorer /></AppButton>
          <AppButton aria-label="Microsoft Store"><Store /></AppButton>
          <AppButton aria-label="Outlook"><Outlook /></AppButton>
          <AppButton aria-label="Chrome" $running><Chrome /></AppButton>
          <AppButton aria-label="Edge"><Edge /></AppButton>
          <AppButton aria-label="SAP Logon" $running $active><SapGui /></AppButton>
        </Apps>
        <Tray>
          <News><NewsIcon />‘Sophisticated subscri...</News>
          <TrayIcons>
            <IconButton aria-label="Show hidden icons"><Caret /></IconButton>
            <IconButton aria-label="Battery"><Battery /></IconButton>
            <IconButton aria-label="Network"><Wifi /></IconButton>
            <IconButton aria-label="Volume"><Speaker /></IconButton>
            <Language>ENG</Language>
          </TrayIcons>
          <Clock>09:04<br />26-09-2025</Clock>
          <Notify aria-label="Notifications"><Bubble /></Notify>
        </Tray>
      </TaskBar>
    </Screen>
  );
}
